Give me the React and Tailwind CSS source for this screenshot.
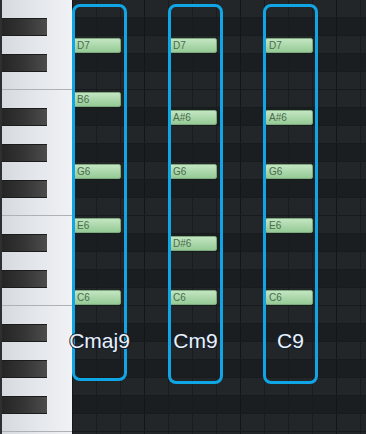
import React from 'react';

const names = ['C', 'C#', 'D', 'D#', 'E', 'F', 'F#', 'G', 'G#', 'A', 'A#', 'B'];

// E7 down to E5, one row per semitone
const rows = [];
for (let i = 0; i < 25; i++) {
  const midi = 100 - i;
  const name = names[midi % 12] + (Math.floor(midi / 12) - 1);
  rows.push({ name, black: name.includes('#'), line: name.startsWith('C') && !name.includes('#') || (name.startsWith('F') && !name.includes('#')) });
}

const rowOf = (n) => rows.findIndex((r) => r.name === n);

const chords = [
  { label: 'Cmaj9', col: 0, left: 72, height: 377, notes: ['D7', 'B6', 'G6', 'E6', 'C6'] },
  { label: 'Cm9', col: 4, left: 168, height: 380, notes: ['D7', 'A#6', 'G6', 'D#6', 'C6'] },
  { label: 'C9', col: 8, left: 263, height: 380, notes: ['D7', 'A#6', 'G6', 'E6', 'C6'] },
];

const cols = Array.from({ length: 13 });

function Keys() {
  return (
    <div className="flex w-[73px] shrink-0 flex-col border-l-2 border-r border-l-[#2c3033] border-r-[#15181a]">
      {rows.map((r) => (
        <div
          key={r.name}
          className={`relative h-[18px] shrink-0 bg-gradient-to-r from-[#d6d9de] via-[#e4e7eb] to-[#f0f2f5] ${r.line ? 'border-b border-[#aeb2b8]' : ''}`}
        >
          {r.black && (
            <div className="h-full w-[45px] border-y border-[#1c1c1c] bg-gradient-to-r from-[#252525] via-[#353535] to-[#4c4c4c]" />
          )}
        </div>
      ))}
    </div>
  );
}

function Grid() {
  return (
    <div className="relative flex-1 overflow-hidden">
      {rows.map((r) => (
        <div
          key={r.name}
          className={`flex h-[18px] shrink-0 border-b border-[#181b1d] ${r.black ? 'bg-[#1b1e21]' : 'bg-[#222629]'}`}
        >
          {cols.map((_, c) => (
            <div
              key={c}
              className={`h-full w-[24px] shrink-0 border-r ${c % 4 === 2 ? 'border-[#131517]' : 'border-[#191c1e]'}`}
            />
          ))}
        </div>
      ))}
      {chords.map((ch) =>
        ch.notes.map((n) => (
          <div
            key={ch.label + n}
            className="absolute flex h-[15px] w-[48px] items-center rounded-[2px] border border-[#7daa7d] bg-gradient-to-b from-[#c2e6c2] to-[#96ca96] pl-[3px] text-[10px] leading-none text-[#4b6b4b]"
            style={{ left: ch.col * 24, top: rowOf(n) * 18 + 2 }}
          >
            {n}
          </div>
        ))
      )}
    </div>
  );
}

export default function App() {
  return (
    <div className="relative flex h-[434px] w-[366px] overflow-hidden bg-[#1c1f22] font-['Liberation_Sans',Arial,sans-serif]">
      <Keys />
      <Grid />
      {chords.map((ch) => (
        <div
          key={ch.label}
          className="absolute top-[4px] w-[55px] rounded-[8px] border-[3px] border-[#10a6e6]"
          style={{ left: ch.left, height: ch.height }}
        >
          <div className="absolute left-1/2 top-[323px] -translate-x-1/2 whitespace-nowrap text-[21px] leading-[21px] text-[#eaf1fc] [text-shadow:1px_0_0_#16202b,-1px_0_0_#16202b,0_1px_0_#16202b,0_-1px_0_#16202b,1px_1px_1px_#16202b]">
            {ch.label}
          </div>
        </div>
      ))}
    </div>
  );
}
